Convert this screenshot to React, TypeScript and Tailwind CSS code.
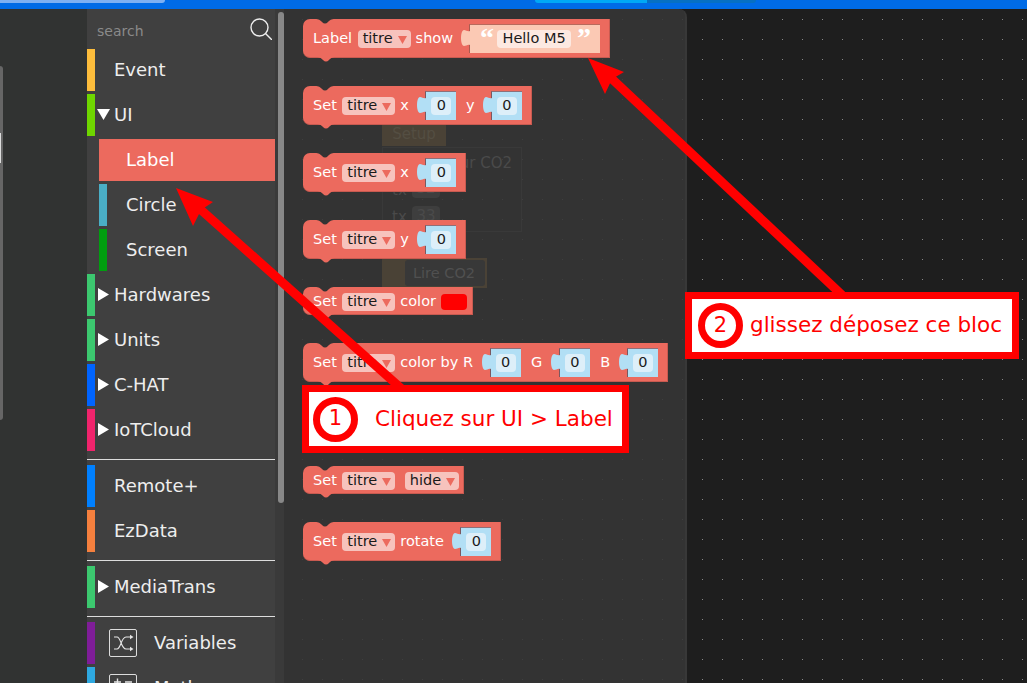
import type { ReactNode } from "react";

type Cat = {
  name: string;
  color?: string;
  arrow?: "down" | "right";
  sub?: boolean;
  active?: boolean;
  icon?: "shuffle" | "math";
};

const groups: Cat[][] = [
  [
    { name: "Event", color: "bg-[#fdbd3c]" },
    { name: "UI", color: "bg-[#6fd600]", arrow: "down" },
    { name: "Label", sub: true, active: true },
    { name: "Circle", color: "bg-[#4aaec6]", sub: true },
    { name: "Screen", color: "bg-[#009e0f]", sub: true },
    { name: "Hardwares", color: "bg-[#3cc86f]", arrow: "right" },
    { name: "Units", color: "bg-[#3cc86f]", arrow: "right" },
    { name: "C-HAT", color: "bg-[#0064ff]", arrow: "right" },
    { name: "IoTCloud", color: "bg-[#f0246c]", arrow: "right" },
  ],
  [
    { name: "Remote+", color: "bg-[#0080ff]" },
    { name: "EzData", color: "bg-[#f5803e]" },
  ],
  [{ name: "MediaTrans", color: "bg-[#3cc86f]", arrow: "right" }],
  [
    { name: "Variables", color: "bg-[#7f1d98]", icon: "shuffle" },
    { name: "Math", color: "bg-[#2ea8e0]", icon: "math" },
  ],
];

function CatRow({ cat }: { cat: Cat }) {
  return (
    <div
      className={
        "mb-[3px] flex h-[42px] shrink-0 items-center text-[18px] " +
        (cat.sub ? "ml-[12px] " : "") +
        (cat.active ? "bg-[#ec6a5e] text-white" : "text-[#eeeeee]")
      }
    >
      <div className={"h-full w-[8px] shrink-0 " + (cat.color ?? "")} />
      {cat.sub ? (
        <div className="w-[19px] shrink-0" />
      ) : (
        <div className="flex w-[19px] shrink-0 items-center justify-center pr-[2px]">
          {cat.arrow === "down" && (
            <svg width="13" height="11" viewBox="0 0 13 11" className="mt-[-2px]">
              <path d="M0 0H13L6.5 11Z" fill="#fff" />
            </svg>
          )}
          {cat.arrow === "right" && (
            <svg width="11" height="13" viewBox="0 0 11 13" className="mt-[-2px]">
              <path d="M0 0V13L11 6.5Z" fill="#fff" />
            </svg>
          )}
        </div>
      )}
      {cat.icon && (
        <div className="ml-[-5px] mr-[17px] flex h-[28px] w-[28px] shrink-0 items-center justify-center rounded-[2px] border border-[#dddddd]">
          {cat.icon === "shuffle" ? (
            <svg width="24" height="24" viewBox="0 0 24 24" fill="none" stroke="#e5e5e5" strokeWidth="1.1">
              <path d="M3 6H6C10 6 10 18 15 18H20M3 18H6C10 18 10 6 15 6H20" />
              <path d="M19 3.8L22.5 6L19 8.2ZM19 15.8L22.5 18L19 20.2Z" fill="#e5e5e5" stroke="none" />
            </svg>
          ) : (
            <svg width="22" height="22" viewBox="0 0 22 22" fill="none" stroke="#e5e5e5" strokeWidth="1.4">
              <path d="M2 5H9M5.5 1.5V8.5M13 5H20M2 15H9M13 13H20M13 17H20" />
            </svg>
          )}
        </div>
      )}
      <span className="mb-[2px]">{cat.name}</span>
    </div>
  );
}

function Dropdown({ text, className }: { text: string; className?: string }) {
  return (
    <div
      className={
        "flex h-[18px] items-center rounded-[4px] bg-[#f7c3bd] pl-[5px] pr-[4px] text-[#1a1a1a] " +
        (className ?? "ml-[5.5px]")
      }
    >
      <span>{text}</span>
      <svg width="9" height="8" viewBox="0 0 9 8" className="ml-[5px] mt-[2px]">
        <path d="M0 0H9L4.5 8Z" fill="#ec6a5e" />
      </svg>
    </div>
  );
}

function Tab({ fill }: { fill: string }) {
  return (
    <svg width="9" height="29" viewBox="0 0 9 29" className="relative z-10 mr-[-1px] block shrink-0">
      <path d="M9 7C7 8 5 6 3 6C1 6 0 10 0 14C0 18 1 22 3 22C5 22 7 20 9 21Z" fill={fill} />
    </svg>
  );
}

function Num({ className }: { className?: string }) {
  return (
    <div className={"flex items-center " + (className ?? "ml-[8.5px]")}>
      <Tab fill="#b2dff5" />
      <div className="flex h-[29px] w-[31px] items-center justify-center border-l border-t border-l-[#7a5860] border-t-[#8f6f78] bg-[#b2dff5]">
        <div className="flex h-[18px] w-[20px] items-center justify-center rounded-[4px] bg-[#ddeff9] text-[#1a1a1a]">
          0
        </div>
      </div>
    </div>
  );
}

function Word({ children, className }: { children: ReactNode; className?: string }) {
  return <span className={"text-white " + (className ?? "ml-[5px]")}>{children}</span>;
}

function Block({ children, small, pr }: { children: ReactNode; small?: boolean; pr: string }) {
  return (
    <div
      className={
        "relative flex w-fit items-center rounded-l-[7px] border-b border-r border-[#c85a50] bg-[#ec6a5e] pl-[10px] text-[14.5px] " +
        (small ? "h-[28px] pt-[2px] " : "h-[39px] pt-[1px] ") +
        pr
      }
    >
      <svg width="20" height="5" viewBox="0 0 20 5" className="absolute left-[12px] top-0">
        <path d="M0 0C4 0 5 1 7 3C9 5 11 5 13 3C15 1 16 0 20 0Z" fill="#333333" />
      </svg>
      <svg width="20" height="5" viewBox="0 0 20 5" className="absolute left-[13px] top-full">
        <path d="M0 0C4 0 5 1 7 3C9 5 11 5 13 3C15 1 16 0 20 0Z" fill="#ec6a5e" />
      </svg>
      {children}
    </div>
  );
}

function Callout({ n, text, className, textClass }: { n: string; text: string; className: string; textClass: string }) {
  return (
    <div className={"absolute z-20 flex items-center border-[7px] border-[#ff0000] bg-white text-[#ff0000] " + className}>
      <div className="flex h-[45px] w-[45px] shrink-0 items-center justify-center rounded-full border-[7px] border-[#ff0000] bg-white text-[21px]">
        {n}
      </div>
      <span className={"whitespace-nowrap text-[21.5px] " + textClass}>{text}</span>
    </div>
  );
}

export default function App() {
  return (
    <div className="relative flex h-[683px] w-[1027px] flex-col overflow-hidden bg-[#1e1e1e] font-['DejaVu_Sans','Liberation_Sans',sans-serif]">
      {/* browser strip */}
      <div className="flex h-[9px] shrink-0 items-start bg-[#006be6]">
        <div className="h-[3px] w-[165px] rounded-br-[4px] bg-[#7db0f2]" />
        <div className="ml-[370px] h-[3px] w-[112px] rounded-bl-[4px] bg-[#00a8f5]" />
        <div className="h-[3px] w-[109px] rounded-br-[4px] bg-[#0670c4]" />
      </div>

      <div className="flex min-h-0 flex-1">
        {/* device rail */}
        <div className="relative w-[87px] shrink-0 bg-[#313332]">
          <div className="absolute left-0 top-[57px] h-[354px] w-[3px] rounded-r-[4px] bg-[#666666]" />
          <div className="absolute left-0 top-[124px] h-[30px] w-px bg-[#dddddd]" />
        </div>

        {/* toolbox */}
        <div className="flex w-[188px] shrink-0 flex-col bg-[#404040]">
          <div className="flex h-[40px] shrink-0 items-center justify-between pl-[10px] pr-[3px] pt-[4px] text-[14px] text-[#8a8a8a]">
            <span>search</span>
            <svg width="22" height="22" viewBox="0 0 22 22" fill="none" stroke="#eeeeee" strokeWidth="1.4" className="mt-[-4px]">
              <circle cx="9.5" cy="9.5" r="8.5" />
              <path d="M15.5 15.5L22 22" />
            </svg>
          </div>
          {groups.map((g, i) => (
            <div key={i} className="flex flex-col">
              {i > 0 && <div className="my-[5px] h-px bg-[#dddddd]" />}
              {g.map((c) => (
                <CatRow key={c.name} cat={c} />
              ))}
            </div>
          ))}
        </div>

        {/* toolbox scrollbar */}
        <div className="w-[9px] shrink-0 bg-[#3a3a3a] pl-[3px] pt-[3px]">
          <div className="h-[491px] w-[6px] rounded-[3px] bg-[#888888]" />
        </div>

        {/* flyout */}
        <div className="relative w-[403px] shrink-0 rounded-tr-[8px] border-r-2 border-[#383838] bg-[#333333] bg-[radial-gradient(circle_at_18.5px_10.5px,#3f3f3f_0.6px,transparent_0.9px)] bg-[length:20px_20px] pl-[19px] pt-[10px]">
          {/* workspace blocks showing through */}
          <div className="absolute left-[98px] top-[113px] flex h-[24px] w-[64px] items-center justify-center bg-[#4a4236] text-[15px] text-[#544e42]">
            Setup
          </div>
          <div className="absolute left-[98px] top-[138px] h-[85px] w-[140px] border border-[#393939] text-[15px] text-[#4a4a4a]">
            <span className="absolute right-[9px] top-[4px]">ur CO2</span>
            <span className="absolute left-[9px] top-[31px]">tx</span>
            <span className="absolute left-[29px] top-[30px] flex h-[20px] w-[28px] items-center justify-center rounded-[4px] bg-[#3e3e3e]">32</span>
            <span className="absolute left-[9px] top-[58px]">tx</span>
            <span className="absolute left-[29px] top-[58px] flex h-[20px] w-[28px] items-center justify-center rounded-[4px] bg-[#3e3e3e]">33</span>
          </div>
          <div className="absolute left-[98px] top-[249px] flex h-[30px] w-[105px] items-stretch bg-[#4a4236] p-[2px] pl-[23px] text-[14.5px] text-[#505050]">
            <div className="flex flex-1 items-center rounded-[3px] bg-[#383838] pl-[8px] pt-[1px]">Lire CO2</div>
          </div>

          <div className="relative flex flex-col gap-[28px]">
            <Block pr="pr-[9px]">
              <Word className="">Label</Word>
              <Dropdown text="titre" />
              <Word>show</Word>
              <div className="ml-[8px] flex items-center">
                <Tab fill="#fbc9b4" />
                <div className="flex h-[29px] w-[131px] items-center border-l border-t border-l-[#a85c50] border-t-[#b86a5c] bg-[#fbc9b4] pl-[10px]">
                  <span className="mt-[-3px] w-[17px] font-['Liberation_Serif',serif] text-[28px] font-bold leading-[28px] text-white">“</span>
                  <div className="flex h-[18px] w-[74px] items-center justify-center rounded-[4px] bg-[#fde9e1] text-[#1a1a1a]">
                    Hello M5
                  </div>
                  <span className="ml-[6px] mt-[-3px] font-['Liberation_Serif',serif] text-[28px] font-bold leading-[28px] text-white">”</span>
                </div>
              </div>
            </Block>
            <Block pr="pr-[9px]">
              <Word className="">Set</Word>
              <Dropdown text="titre" />
              <Word>x</Word>
              <Num />
              <Word className="ml-[9.5px]">y</Word>
              <Num />
            </Block>
            <Block pr="pr-[9px]">
              <Word className="">Set</Word>
              <Dropdown text="titre" />
              <Word>x</Word>
              <Num />
            </Block>
            <Block pr="pr-[9px]">
              <Word className="">Set</Word>
              <Dropdown text="titre" />
              <Word>y</Word>
              <Num />
            </Block>
            <Block small pr="pr-[5px]">
              <Word className="">Set</Word>
              <Dropdown text="titre" />
              <Word>color</Word>
              <div className="ml-[5px] h-[16px] w-[26px] rounded-[4px] bg-[#ff0000]" />
            </Block>
            <Block pr="pr-[9px]">
              <Word className="">Set</Word>
              <Dropdown text="titre" />
              <Word>color by R</Word>
              <Num />
              <Word className="ml-[10.5px]">G</Word>
              <Num />
              <Word className="ml-[10.5px]">B</Word>
              <Num />
            </Block>
            <div className="mt-[56px]">
              <Block small pr="pr-[4px]">
                <Word className="">Set</Word>
                <Dropdown text="titre" />
                <Dropdown text="hide" className="ml-[9.5px]" />
              </Block>
            </div>
            <Block pr="pr-[9px]">
              <Word className="">Set</Word>
              <Dropdown text="titre" />
              <Word>rotate</Word>
              <Num />
            </Block>
          </div>
        </div>

        {/* workspace */}
        <div className="min-w-0 flex-1 bg-[#1e1e1e] bg-[radial-gradient(circle_at_15.5px_10.5px,#8a8a8a_0.6px,transparent_0.9px)] bg-[length:20px_20px]" />
      </div>

      {/* annotation arrows */}
      <svg width="1027" height="683" viewBox="0 0 1027 683" className="pointer-events-none absolute left-0 top-0 z-10">
        <path d="M200 209L403 390" stroke="#ff0000" strokeWidth="9" fill="none" />
        <path d="M176 188L213 202L201 210L193 226Z" fill="#ff0000" />
        <path d="M611 78L842 295" stroke="#ff0000" strokeWidth="9" fill="none" />
        <path d="M588 58L624 72L612 79L605 94Z" fill="#ff0000" />
      </svg>

      <Callout
        n="1"
        text="Cliquez sur UI > Label"
        className="left-[302px] top-[385px] h-[68px] w-[327px] pl-[4px]"
        textClass="ml-[17px]"
      />
      <Callout
        n="2"
        text="glissez déposez ce bloc"
        className="left-[685px] top-[292px] h-[67px] w-[334px] pl-[6px]"
        textClass="ml-[7px]"
      />
    </div>
  );
}
